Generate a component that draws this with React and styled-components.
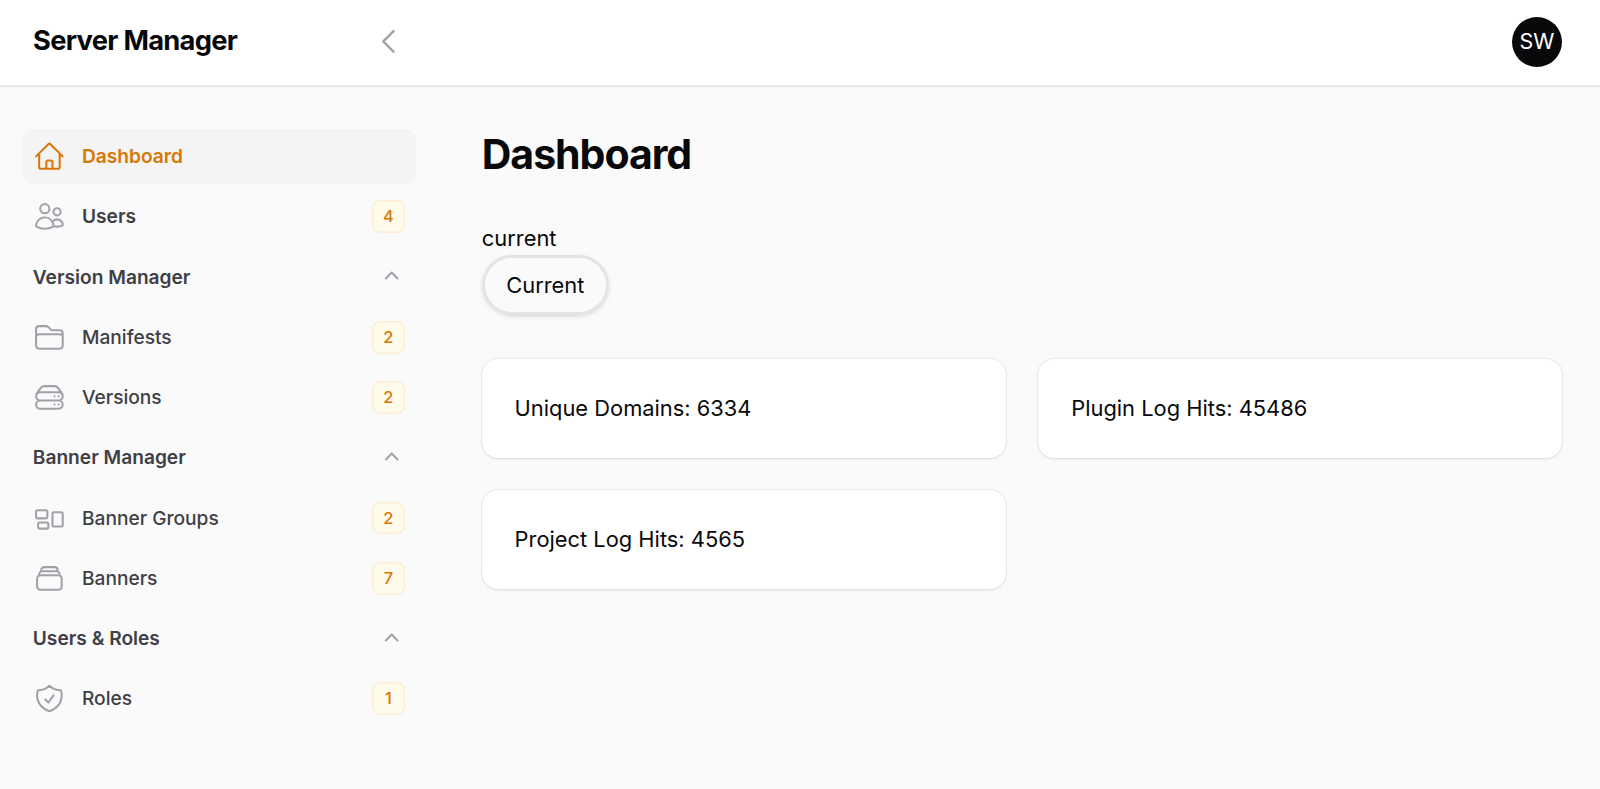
import React from "react";
import styled, { createGlobalStyle } from "styled-components";
import {
  HiOutlineHome,
  HiOutlineUsers,
  HiOutlineFolder,
  HiOutlineServerStack,
  HiOutlineRectangleGroup,
  HiOutlineRectangleStack,
  HiOutlineShieldCheck,
  HiOutlineChevronLeft,
  HiMiniChevronUp,
} from "react-icons/hi2";

const GlobalStyle = createGlobalStyle`
  *, *::before, *::after { box-sizing: border-box; }
  body {
    margin: 0;
    background: #fafafa;
    color: #09090b;
    font-family: Inter, "Liberation Sans", sans-serif;
    font-size: 21.86px;
    line-height: 32.8px;
    -webkit-font-smoothing: antialiased;
  }
  h1, p, ul { margin: 0; padding: 0; }
  ul { list-style: none; }
  button { font: inherit; color: inherit; background: none; border: 0; padding: 0; }
`;

const Page = styled.div`
  min-height: 789px;
  display: flex;
  flex-direction: column;
`;

const Topbar = styled.header`
  height: 85px;
  padding: 0 38px 2px 33px;
  display: flex;
  align-items: center;
  background: #fff;
  box-shadow: 0 1px 0 #e6e6e7, 0 2px 1px rgba(9, 9, 11, 0.07);
`;

const Brand = styled.div`
  width: 339px;
  padding-bottom: 1px;
  font-size: 27.3px;
  line-height: 38px;
  font-weight: 700;
  letter-spacing: -0.026em;
`;

const CollapseButton = styled.button`
  display: flex;
  color: #a1a1aa;
  font-size: 32.8px;
  path { stroke-width: 1.7; }
`;

const Avatar = styled.div`
  width: 50px;
  height: 50px;
  margin-left: auto;
  border-radius: 50%;
  background: #09090b;
  color: #fff;
  display: flex;
  align-items: center;
  justify-content: center;
  font-size: 21.4px;
`;

const Body = styled.div`
  flex: 1;
  display: flex;
`;

const Sidebar = styled.nav`
  width: 437.6px;
  padding: 44.3px 21.9px 0;
  display: flex;
  flex-direction: column;
  gap: 5.48px;
`;

const ItemList = styled.ul`
  display: flex;
  flex-direction: column;
  gap: 5.48px;
`;

const Row = styled.li`
  height: 54.75px;
  padding: 0 10.9px;
  display: flex;
  align-items: center;
  gap: 16.4px;
  border-radius: 10.9px;
  font-size: 19.15px;
  font-weight: ${(p) => (p.$strong ? 600 : 500)};
  color: ${(p) => (p.$active ? "#d97706" : "#3f3f46")};
  background: ${(p) => (p.$active ? "#f4f4f5" : "transparent")};
  svg {
    flex: none;
    font-size: 32.8px;
    color: ${(p) => (p.$active ? "#d97706" : "#a1a1aa")};
  }
`;

const Label = styled.span`
  flex: 1;
`;

const Badge = styled.span`
  width: 32.8px;
  height: 32.8px;
  display: flex;
  align-items: center;
  justify-content: center;
  border-radius: 8.2px;
  background: #fffbeb;
  box-shadow: inset 0 0 0 1.4px #fdecd3;
  color: #d97706;
  font-size: 16.4px;
  font-weight: 500;
`;

const GroupHeading = styled.div`
  height: 54.75px;
  padding: 0 10.5px 0 10.9px;
  display: flex;
  align-items: center;
  justify-content: space-between;
  font-size: 19.15px;
  font-weight: 600;
  color: #3f3f46;
  svg {
    font-size: 27.4px;
    color: #a1a1aa;
  }
`;

const Main = styled.main`
  flex: 1;
  padding: 44.6px 37.7px 0 44.2px;
`;

const Title = styled.h1`
  font-size: 41px;
  line-height: 49.2px;
  font-weight: 700;
  letter-spacing: -0.025em;
`;

const Picker = styled.section`
  margin-top: 43px;
  display: flex;
  flex-direction: column;
  align-items: flex-start;
`;

const PillButton = styled.button`
  height: 60px;
  margin-top: 0.8px;
  padding: 0 21.5px;
  border: 3px solid #e4e4e7;
  border-radius: 30px;
  box-shadow: 0 1.4px 4px rgba(0, 0, 0, 0.1), 0 1.4px 2.7px -1.4px rgba(0, 0, 0, 0.1);
`;

const Cards = styled.section`
  margin-top: 43.8px;
  display: grid;
  grid-template-columns: 1fr 1fr;
  gap: 32.8px;
`;

const Card = styled.div`
  padding: 32.8px;
  border-radius: 16.4px;
  background: #fff;
  box-shadow: 0 0 0 1.3px rgba(9, 9, 11, 0.05), 0 1.4px 2.7px rgba(0, 0, 0, 0.05);
`;

const topItems = [
  { label: "Dashboard", Icon: HiOutlineHome, active: true },
  { label: "Users", Icon: HiOutlineUsers, count: 4 },
];

const groups = [
  {
    label: "Version Manager",
    items: [
      { label: "Manifests", Icon: HiOutlineFolder, count: 2 },
      { label: "Versions", Icon: HiOutlineServerStack, count: 2 },
    ],
  },
  {
    label: "Banner Manager",
    items: [
      { label: "Banner Groups", Icon: HiOutlineRectangleGroup, count: 2 },
      { label: "Banners", Icon: HiOutlineRectangleStack, count: 7 },
    ],
  },
  {
    label: "Users & Roles",
    items: [{ label: "Roles", Icon: HiOutlineShieldCheck, count: 1 }],
  },
];

const stats = ["Unique Domains: 6334", "Plugin Log Hits: 45486", "Project Log Hits: 4565"];

function NavItem({ label, Icon, count, active, strong }) {
  return (
    <Row $active={active} $strong={strong}>
      <Icon />
      <Label>{label}</Label>
      {count != null && <Badge>{count}</Badge>}
    </Row>
  );
}

export default function App() {
  return (
    <Page>
      <GlobalStyle />
      <Topbar>
        <Brand>Server Manager</Brand>
        <CollapseButton aria-label="Collapse sidebar">
          <HiOutlineChevronLeft />
        </CollapseButton>
        <Avatar>SW</Avatar>
      </Topbar>
      <Body>
        <Sidebar>
          <ItemList>
            {topItems.map((item) => (
              <NavItem key={item.label} strong {...item} />
            ))}
          </ItemList>
          {groups.map((group) => (
            <React.Fragment key={group.label}>
              <GroupHeading>
                {group.label}
                <HiMiniChevronUp />
              </GroupHeading>
              <ItemList>
                {group.items.map((item) => (
                  <NavItem key={item.label} {...item} />
                ))}
              </ItemList>
            </React.Fragment>
          ))}
        </Sidebar>
        <Main>
          <Title>Dashboard</Title>
          <Picker>
            <p>current</p>
            <PillButton>Current</PillButton>
          </Picker>
          <Cards>
            {stats.map((stat) => (
              <Card key={stat}>{stat}</Card>
            ))}
          </Cards>
        </Main>
      </Body>
    </Page>
  );
}
